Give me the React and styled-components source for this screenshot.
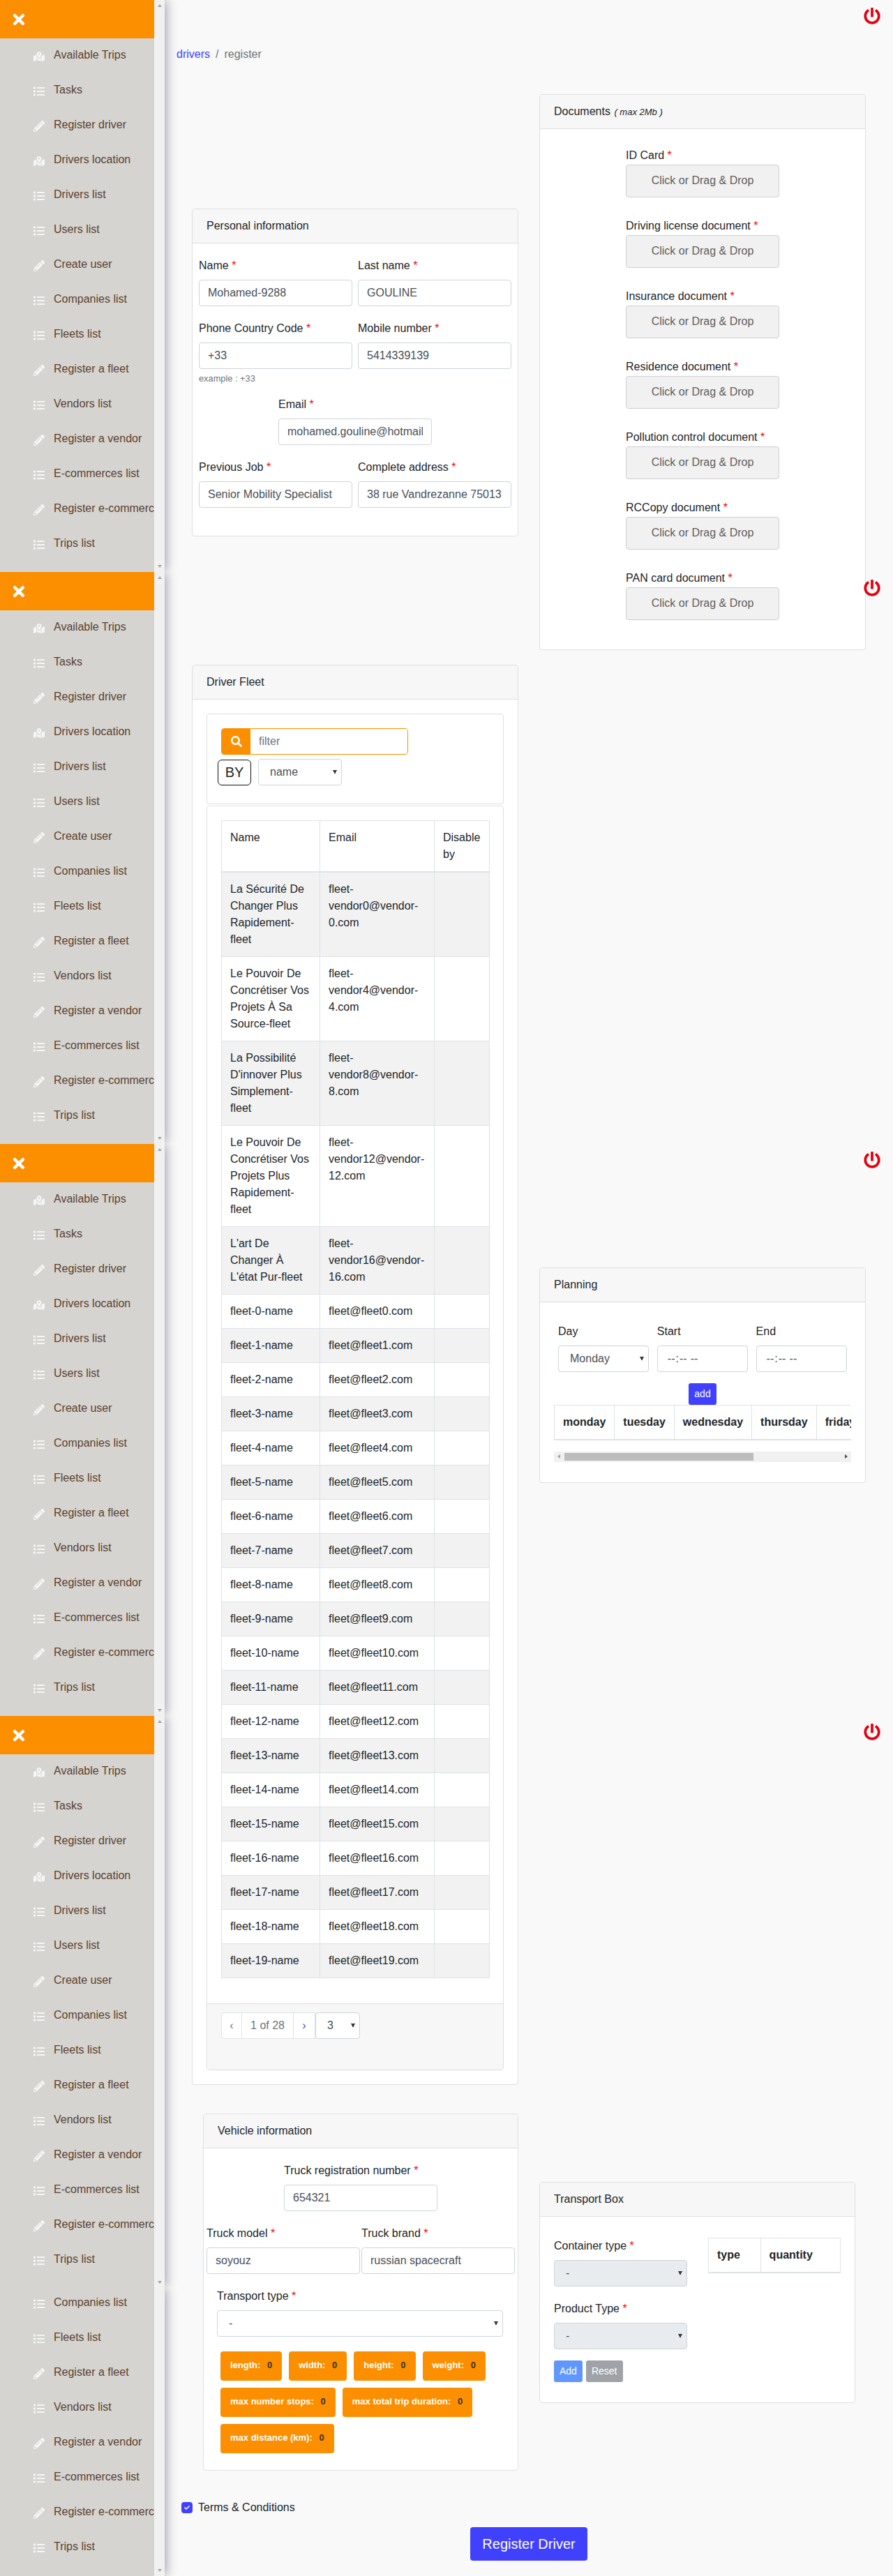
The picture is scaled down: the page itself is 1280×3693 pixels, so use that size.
import styled, { createGlobalStyle } from 'styled-components'
import { FaCheck, FaList, FaMapMarkedAlt, FaPencilAlt, FaPowerOff, FaSearch, FaTimes } from 'react-icons/fa'

const NAV = [
  ['map', 'Available Trips'],
  ['list', 'Tasks'],
  ['pen', 'Register driver'],
  ['map', 'Drivers location'],
  ['list', 'Drivers list'],
  ['list', 'Users list'],
  ['pen', 'Create user'],
  ['list', 'Companies list'],
  ['list', 'Fleets list'],
  ['pen', 'Register a fleet'],
  ['list', 'Vendors list'],
  ['pen', 'Register a vendor'],
  ['list', 'E-commerces list'],
  ['pen', 'Register e-commerce'],
  ['list', 'Trips list'],
]

const NAV_ICONS = { map: FaMapMarkedAlt, list: FaList, pen: FaPencilAlt }

const DOCUMENTS = [
  'ID Card',
  'Driving license document',
  'Insurance document',
  'Residence document',
  'Pollution control document',
  'RCCopy document',
  'PAN card document',
]

const FLEETS = [
  ['La Sécurité De Changer Plus Rapidement-fleet', 'fleet-vendor0@vendor-0.com'],
  ['Le Pouvoir De Concrétiser Vos Projets À Sa Source-fleet', 'fleet-vendor4@vendor-4.com'],
  ["La Possibilité D'innover Plus Simplement-fleet", 'fleet-vendor8@vendor-8.com'],
  ['Le Pouvoir De Concrétiser Vos Projets Plus Rapidement-fleet', 'fleet-vendor12@vendor-12.com'],
  ["L'art De Changer À L'état Pur-fleet", 'fleet-vendor16@vendor-16.com'],
  ...Array.from({ length: 20 }, (_, i) => [`fleet-${i}-name`, `fleet@fleet${i}.com`]),
]

const DAYS = ['monday', 'tuesday', 'wednesday', 'thursday', 'friday', 'saturday', 'sunday']

const LIMITS = [
  'length',
  'width',
  'height',
  'weight',
  'max number stops',
  'max total trip duration',
  'max distance (km)',
]

const Sidebar = ({ start = 0, height = 820, header = true, top = true, shift = 0 }) => (
  <Panel $height={height}>
    <NavColumn>
      {header && (
        <NavHeader>
          <FaTimes />
        </NavHeader>
      )}
      <NavList $shift={shift}>
        {NAV.slice(start).map(([icon, label]) => {
          const Icon = NAV_ICONS[icon]
          return (
            <NavItem key={label}>
              <NavIcon>
                <Icon />
              </NavIcon>
              {label}
            </NavItem>
          )
        })}
      </NavList>
    </NavColumn>
    <Gutter>
      <ArrowUp $hidden={!top} />
      <ArrowDown />
    </Gutter>
  </Panel>
)

const Required = ({ children }) => (
  <Label>
    {children} <Star>*</Star>
  </Label>
)

const Field = ({ label, value, center }) => (
  <FieldBox $center={center}>
    <Required>{label}</Required>
    <Input readOnly value={value} />
  </FieldBox>
)

const App = () => {
  return (
    <Page>
      <GlobalStyle />
      <SideColumn>
        <Sidebar />
        <Sidebar />
        <Sidebar />
        <Sidebar />
        <Sidebar start={7} height={413} header={false} top={false} shift={-3} />
      </SideColumn>

      <Main>
        {[0, 1, 2, 3].map((i) => (
          <Power key={i} $top={11 + i * 820}>
            <FaPowerOff />
          </Power>
        ))}

        <Breadcrumb>
          <a href="#drivers">drivers</a>
          <Slash>/</Slash>
          <span>register</span>
        </Breadcrumb>

        <Row>
          <Card>
            <CardHeader>Personal information</CardHeader>
            <PersonalBody>
              <TwoCols>
                <Field label="Name" value="Mohamed-9288" />
                <Field label="Last name" value="GOULINE" />
                <FieldBox>
                  <Required>Phone Country Code</Required>
                  <Input readOnly value="+33" />
                  <Help>example : +33</Help>
                </FieldBox>
                <Field label="Mobile number" value="5414339139" />
              </TwoCols>
              <Field center label="Email" value="mohamed.gouline@hotmail.com" />
              <TwoCols>
                <Field label="Previous Job" value="Senior Mobility Specialist" />
                <Field label="Complete address" value="38 rue Vandrezanne 75013 Paris" />
              </TwoCols>
            </PersonalBody>
          </Card>

          <Card>
            <CardHeader>
              Documents <em>( max 2Mb )</em>
            </CardHeader>
            <DocumentsBody>
              {DOCUMENTS.map((doc) => (
                <DocItem key={doc}>
                  <DocLabel>
                    {doc} <Star>*</Star>
                  </DocLabel>
                  <DropZone>Click or Drag &amp; Drop</DropZone>
                </DocItem>
              ))}
            </DocumentsBody>
          </Card>
        </Row>

        <Row>
          <Card>
            <CardHeader>Driver Fleet</CardHeader>
            <FleetBody>
              <FilterCard>
                <FilterGroup>
                  <FilterAddon>
                    <FaSearch />
                  </FilterAddon>
                  <FilterInput placeholder="filter" />
                </FilterGroup>
                <ByRow>
                  <ByButton>BY</ByButton>
                  <BySelect defaultValue="name">
                    <option>name</option>
                  </BySelect>
                </ByRow>
              </FilterCard>

              <TableCard>
                <TableArea>
                  <FleetTable>
                    <colgroup>
                      <col width="141" />
                      <col width="164" />
                      <col width="79" />
                    </colgroup>
                    <thead>
                      <tr>
                        <FleetHead>Name</FleetHead>
                        <FleetHead>Email</FleetHead>
                        <FleetHead>Disable by</FleetHead>
                      </tr>
                    </thead>
                    <tbody>
                      {FLEETS.map(([name, email]) => (
                        <FleetRow key={email}>
                          <FleetCell>{name}</FleetCell>
                          <FleetCell>{email}</FleetCell>
                          <FleetCell />
                        </FleetRow>
                      ))}
                    </tbody>
                  </FleetTable>
                </TableArea>
                <TableFooter>
                  <PageButton $width={30} $first>‹</PageButton>
                  <PageButton $width={74}>1 of 28</PageButton>
                  <PageButton $width={31} $active>›</PageButton>
                  <PageSelect defaultValue="3">
                    <option>3</option>
                  </PageSelect>
                </TableFooter>
              </TableCard>
            </FleetBody>
          </Card>

          <Card>
            <CardHeader>Planning</CardHeader>
            <PlanningBody>
              <PlanningForm>
                <FieldBox>
                  <Label>Day</Label>
                  <Select defaultValue="Monday">
                    <option>Monday</option>
                  </Select>
                </FieldBox>
                <FieldBox>
                  <Label>Start</Label>
                  <TimeInput type="time" />
                </FieldBox>
                <FieldBox>
                  <Label>End</Label>
                  <TimeInput type="time" />
                </FieldBox>
              </PlanningForm>
              <AddSlot>
                <SmallButton>add</SmallButton>
              </AddSlot>
              <DaysClip>
                <DaysTable>
                  <thead>
                    <tr>
                      {DAYS.map((day) => (
                        <DayHead key={day}>{day}</DayHead>
                      ))}
                    </tr>
                  </thead>
                </DaysTable>
              </DaysClip>
              <HScrollBar>
                <ArrowLeft />
                <HScrollTrack>
                  <HScrollThumb />
                </HScrollTrack>
                <ArrowRight />
              </HScrollBar>
            </PlanningBody>
          </Card>
        </Row>

        <Row $vehicle>
          <VehicleCard>
            <CardHeader>Vehicle information</CardHeader>
            <VehicleBody>
              <Field center label="Truck registration number" value="654321" />
              <VehicleCols>
                <Field label="Truck model" value="soyouz" />
                <Field label="Truck brand" value="russian spacecraft" />
              </VehicleCols>
              <TransportType>
                <Required>Transport type</Required>
                <Select defaultValue="-">
                  <option>-</option>
                </Select>
              </TransportType>
              <Chips>
                {LIMITS.map((limit) => (
                  <Chip key={limit}>
                    {limit}: <ChipValue>0</ChipValue>
                  </Chip>
                ))}
              </Chips>
            </VehicleBody>
          </VehicleCard>

          <BoxCard>
            <CardHeader>Transport Box</CardHeader>
            <BoxBody>
              <BoxForm>
                <FieldBox>
                  <Required>Container type</Required>
                  <Select disabled defaultValue="-">
                    <option>-</option>
                  </Select>
                </FieldBox>
                <FieldBox>
                  <Required>Product Type</Required>
                  <Select disabled defaultValue="-">
                    <option>-</option>
                  </Select>
                </FieldBox>
                <BoxActions>
                  <SmallButton $color="#5f97ff">Add</SmallButton>
                  <SmallButton $color="#9fa3a8">Reset</SmallButton>
                </BoxActions>
              </BoxForm>
              <BoxTable>
                <thead>
                  <tr>
                    <BoxHead $width={75}>type</BoxHead>
                    <BoxHead $width={115}>quantity</BoxHead>
                  </tr>
                </thead>
              </BoxTable>
            </BoxBody>
          </BoxCard>
        </Row>

        <Terms>
          <CheckBox>
            <FaCheck />
          </CheckBox>
          Terms &amp; Conditions
        </Terms>

        <SubmitRow>
          <SubmitButton>Register Driver</SubmitButton>
        </SubmitRow>
      </Main>
    </Page>
  )
}

export default App

const GlobalStyle = createGlobalStyle`
  * {
    box-sizing: border-box;
  }
  body {
    margin: 0;
    background: #f9f9f9;
    color: #212529;
    font-family: "Liberation Sans", Arial, sans-serif;
    font-size: 16px;
    line-height: 1.5;
  }
`

const Page = styled.div`
  display: flex;
  width: 1280px;
  height: 3693px;
  overflow: hidden;
`

const SideColumn = styled.div`
  width: 236px;
  flex: none;
  position: relative;
  z-index: 1;
`

const Panel = styled.div`
  display: flex;
  height: ${(p) => p.$height}px;
  box-shadow: 3px 0 14px rgba(40, 40, 80, 0.4);
  clip-path: inset(0 -40px 0 0);
`

const NavColumn = styled.div`
  width: 221px;
  background: #d5d4d0;
  overflow: hidden;
`

const NavHeader = styled.div`
  display: flex;
  align-items: center;
  height: 55px;
  padding-left: 15px;
  background: #fb8f00;
  color: #fff;
  font-size: 24px;
`

const NavList = styled.div`
  margin-top: ${(p) => p.$shift || 0}px;
`

const NavItem = styled.div`
  display: flex;
  align-items: center;
  height: 50px;
  padding-left: 48px;
  padding-bottom: 2px;
  color: #5b4130;
  white-space: nowrap;
`

const NavIcon = styled.span`
  display: flex;
  flex: none;
  width: 16px;
  margin: 3px 13px 0 0;
  color: #f6f6f6;
  font-size: 16px;
`

const Gutter = styled.div`
  display: flex;
  flex-direction: column;
  justify-content: space-between;
  align-items: center;
  width: 15px;
  padding: 6px 0;
  background: #f1f1f1;
`

const ArrowUp = styled.div`
  width: 0;
  height: 0;
  border-left: 3.5px solid transparent;
  border-right: 3.5px solid transparent;
  border-bottom: 4px solid #a3a3a3;
  visibility: ${(p) => (p.$hidden ? 'hidden' : 'visible')};
`

const ArrowDown = styled.div`
  width: 0;
  height: 0;
  border-left: 3.5px solid transparent;
  border-right: 3.5px solid transparent;
  border-top: 4px solid #a3a3a3;
`

const Main = styled.main`
  position: relative;
  flex: 1;
  min-width: 0;
`

const Power = styled.div`
  position: absolute;
  top: ${(p) => p.$top}px;
  right: 18px;
  display: flex;
  color: #e30010;
  font-size: 24px;
`

const Breadcrumb = styled.nav`
  display: flex;
  margin: 66px 0 45px 17px;
  color: #6c757d;

  a {
    color: #4040ff;
    text-decoration: none;
  }
`

const Slash = styled.span`
  margin: 0 8px;
`

const Row = styled.div`
  display: flex;
  align-items: center;
  gap: 30px;
  padding-left: 39px;
  margin-top: ${(p) => (p.$vehicle ? 41 : 21)}px;

  &:first-of-type {
    margin-top: 0;
  }
`

const Card = styled.section`
  width: 468px;
  flex: none;
  background: #fff;
  border: 1px solid #dfdfdf;
  border-radius: 4px;
`

const VehicleCard = styled(Card)`
  width: 452px;
  margin-left: 16px;
`

const BoxCard = styled(Card)`
  width: 453px;
`

const CardHeader = styled.header`
  height: 49px;
  padding: 12px 20px;
  background: #f7f7f7;
  border-bottom: 1px solid #dfdfdf;
  border-radius: 3px 3px 0 0;

  em {
    font-size: 13px;
    margin-left: 1px;
  }
`

const PersonalBody = styled.div`
  padding: 20px 9px 20px;
`

const TwoCols = styled.div`
  display: grid;
  grid-template-columns: 220px 220px;
  column-gap: 8px;
`

const FieldBox = styled.div`
  width: ${(p) => (p.$center ? '220px' : 'auto')};
  margin: ${(p) => (p.$center ? '0 auto 20px' : '0 0 20px')};
`

const Label = styled.label`
  display: block;
  margin-bottom: 8px;
`

const Star = styled.span`
  color: #ff0000;
`

const Input = styled.input`
  display: block;
  width: 100%;
  height: 38px;
  padding: 6px 12px;
  color: #495057;
  background: #fff;
  border: 1px solid #ced4da;
  border-radius: 4px;
  font: inherit;
  outline: none;
`

const TimeInput = styled(Input)`
  padding-left: 13px;

  &::-webkit-calendar-picker-indicator {
    display: none;
  }
`

const Help = styled.small`
  display: block;
  margin: 4px 0 -4px;
  color: #6c757d;
  font-size: 12.8px;
  line-height: 19px;
`

const Select = styled.select`
  display: block;
  width: 100%;
  height: 38px;
  padding: 6px 20px 6px 16px;
  color: #495057;
  background-color: #fff;
  background-image: linear-gradient(to top right, transparent 50%, #343a40 50%),
    linear-gradient(to top left, transparent 50%, #343a40 50%);
  background-repeat: no-repeat;
  background-position: calc(100% - 9px) center, calc(100% - 6px) center;
  background-size: 3px 6px;
  border: 1px solid #ced4da;
  border-radius: 4px;
  font: inherit;
  appearance: none;
  outline: none;

  &:disabled {
    background-color: #e9ecef;
    opacity: 1;
  }
`

const DocumentsBody = styled.div`
  padding: 26px 0 13px;
`

const DocItem = styled.div`
  width: 220px;
  margin: 0 auto 29px;
`

const DocLabel = styled.div`
  margin-bottom: 1px;
`

const DropZone = styled.div`
  height: 47px;
  line-height: 43px;
  text-align: center;
  color: #5e5e5e;
  background: #f1f1f1;
  border: 1px solid #cfcfcf;
  border-radius: 4px;
`

const FleetBody = styled.div`
  padding: 20px;
`

const FilterCard = styled.div`
  height: 130px;
  padding: 20px;
  border: 1px solid #dfdfdf;
  border-radius: 4px;
`

const FilterGroup = styled.div`
  display: flex;
  width: 268px;
  height: 38px;
  border: 1px solid #fb8f00;
  border-radius: 4px;
  overflow: hidden;
`

const FilterAddon = styled.div`
  display: flex;
  align-items: center;
  justify-content: center;
  width: 41px;
  background: #fb8f00;
  color: #fff;
  font-size: 16px;
`

const FilterInput = styled.input`
  flex: 1;
  min-width: 0;
  padding: 0 12px;
  border: 0;
  font: inherit;
  outline: none;

  &::placeholder {
    color: #6c757d;
  }
`

const ByRow = styled.div`
  display: flex;
  align-items: center;
  gap: 10px;
  margin: 6px 0 0 -5px;
`

const ByButton = styled.button`
  width: 48px;
  height: 37px;
  padding: 0;
  color: #212529;
  background: #fff;
  border: 1px solid #111;
  border-radius: 6px;
  font: inherit;
  font-size: 20px;
`

const BySelect = styled(Select)`
  width: 120px;
`

const TableCard = styled.div`
  margin-top: 2px;
  border: 1px solid #dfdfdf;
  border-radius: 4px;
`

const TableArea = styled.div`
  padding: 20px 20px 36px;
`

const FleetTable = styled.table`
  width: 384px;
  table-layout: fixed;
  border-collapse: collapse;
`

const FleetHead = styled.th`
  padding: 12px;
  border: 1px solid #dee2e6;
  border-bottom-width: 2px;
  font-weight: 400;
  text-align: left;
  vertical-align: top;
`

const FleetRow = styled.tr`
  &:nth-child(odd) {
    background: #f2f2f2;
  }
`

const FleetCell = styled.td`
  padding: 12px;
  border: 1px solid #dee2e6;
  vertical-align: top;
`

const TableFooter = styled.div`
  display: flex;
  padding: 12px 20px 44px;
  background: #f7f7f7;
  border-top: 1px solid #dfdfdf;
  border-radius: 0 0 3px 3px;
`

const PageButton = styled.div`
  width: ${(p) => p.$width}px;
  height: 38px;
  line-height: 36px;
  text-align: center;
  color: ${(p) => (p.$active ? '#4040ff' : '#6c757d')};
  background: #fff;
  border: 1px solid #dee2e6;
  border-left-width: ${(p) => (p.$first ? 1 : 0)}px;
  border-radius: ${(p) => (p.$first ? '4px 0 0 4px' : 0)};
`

const PageSelect = styled(Select)`
  width: 64px;
`

const PlanningBody = styled.div`
  padding: 30px 20px 29px;
`

const PlanningForm = styled.div`
  display: grid;
  grid-template-columns: repeat(3, 1fr);
  column-gap: 11.4px;
  margin: 0 6px;
`

const AddSlot = styled.div`
  display: flex;
  justify-content: center;
  margin-top: -4px;
`

const SmallButton = styled.button`
  height: 31px;
  padding: 0 8px;
  color: #fff;
  background: ${(p) => p.$color || '#4040ff'};
  border: 0;
  border-radius: 3px;
  font: inherit;
  font-size: 14px;
`

const DaysClip = styled.div`
  overflow: hidden;
`

const DaysTable = styled.table`
  margin-bottom: 16px;
  border-collapse: collapse;
`

const DayHead = styled.th`
  padding: 12px;
  border: 1px solid #dee2e6;
  border-bottom-width: 2px;
  text-align: left;
`

const HScrollBar = styled.div`
  display: flex;
  align-items: center;
  height: 15px;
  background: #f1f1f1;
`

const HScrollTrack = styled.div`
  flex: 1;
  height: 11px;
`

const HScrollThumb = styled.div`
  width: 271px;
  height: 100%;
  background: #bdbdbd;
`

const ArrowLeft = styled.div`
  width: 0;
  height: 0;
  margin: 0 6px 0 5px;
  border-top: 3.5px solid transparent;
  border-bottom: 3.5px solid transparent;
  border-right: 4px solid #a3a3a3;
`

const ArrowRight = styled.div`
  width: 0;
  height: 0;
  margin: 0 5px 0 6px;
  border-top: 3.5px solid transparent;
  border-bottom: 3.5px solid transparent;
  border-left: 4px solid #505050;
`

const VehicleBody = styled.div`
  padding: 20px 0 24px;
`

const VehicleCols = styled.div`
  display: grid;
  grid-template-columns: 220px 220px;
  column-gap: 2px;
  padding-left: 4px;
`

const TransportType = styled.div`
  width: 410px;
  margin: 0 0 21px 19px;
`

const Chips = styled.div`
  display: flex;
  flex-wrap: wrap;
  gap: 10px;
  margin-left: 24px;
  width: 420px;
`

const Chip = styled.div`
  height: 42px;
  padding: 0 14px;
  color: #fff;
  background: #fb8f00;
  border-radius: 4px;
  font-size: 13px;
  font-weight: 700;
  line-height: 40px;
`

const ChipValue = styled.span`
  margin-left: 6px;
  color: #333;
`

const BoxBody = styled.div`
  display: flex;
  padding: 30px 20px 29px;
`

const BoxForm = styled.div`
  width: 191px;
`

const BoxActions = styled.div`
  display: flex;
  gap: 5px;
  margin-top: -4px;
`

const BoxTable = styled.table`
  align-self: flex-start;
  width: 190px;
  margin-left: 30px;
  border-collapse: collapse;
`

const BoxHead = styled.th`
  width: ${(p) => p.$width}px;
  padding: 12px;
  border: 1px solid #dee2e6;
  border-bottom-width: 2px;
  text-align: left;
`

const Terms = styled.label`
  display: flex;
  align-items: center;
  gap: 8px;
  margin: 41px 0 0 24px;
`

const CheckBox = styled.span`
  display: flex;
  align-items: center;
  justify-content: center;
  width: 16px;
  height: 16px;
  color: #fff;
  background: #4040ff;
  border-radius: 4px;
  font-size: 8px;
`

const SubmitRow = styled.div`
  display: flex;
  justify-content: center;
  margin-top: 16px;
`

const SubmitButton = styled.button`
  height: 48px;
  padding: 0 17px;
  color: #fff;
  background: #4040ff;
  border: 0;
  border-radius: 4px;
  font: inherit;
  font-size: 20px;
`
